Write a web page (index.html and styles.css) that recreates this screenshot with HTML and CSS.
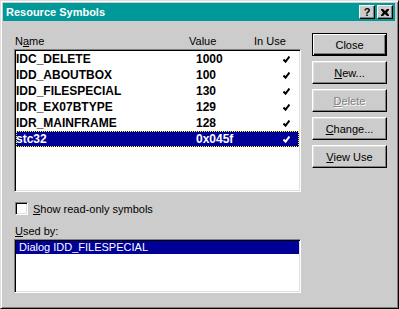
FILE: index.html
```html
<!DOCTYPE html>
<html lang="en">
<head>
  <meta charset="UTF-8">
  <title>Resource Symbols</title>
  <link rel="stylesheet" href="styles.css">
</head>
<body>
  <div class="window">
    <div class="titlebar">
      <span class="title">Resource Symbols</span>
      <div class="title-buttons">
        <span class="tbtn">?</span>
        <span class="tbtn">
          <svg width="8" height="7" viewBox="0 0 8 7"><path d="M0 0h2l2 2 2-2h2v1l-2 2.5 2 2.5v1H6l-2-2-2 2H0V6l2-2.5L0 1z" fill="#000"/></svg>
        </span>
      </div>
    </div>

    <div class="content">
      <div class="left">
        <div class="headers">
          <span class="col-name">N<u>a</u>me</span>
          <span class="col-value">Value</span>
          <span class="col-use">In Use</span>
        </div>

        <div class="listbox symbols">
          <div class="row"><span>IDC_DELETE</span><span>1000</span><svg class="check" width="7" height="7" viewBox="0 0 7 7"><path d="M0.5 3.5l2 2.2 4-5.2" /></svg></div>
          <div class="row"><span>IDD_ABOUTBOX</span><span>100</span><svg class="check" width="7" height="7" viewBox="0 0 7 7"><path d="M0.5 3.5l2 2.2 4-5.2" /></svg></div>
          <div class="row"><span>IDD_FILESPECIAL</span><span>130</span><svg class="check" width="7" height="7" viewBox="0 0 7 7"><path d="M0.5 3.5l2 2.2 4-5.2" /></svg></div>
          <div class="row"><span>IDR_EX07BTYPE</span><span>129</span><svg class="check" width="7" height="7" viewBox="0 0 7 7"><path d="M0.5 3.5l2 2.2 4-5.2" /></svg></div>
          <div class="row"><span>IDR_MAINFRAME</span><span>128</span><svg class="check" width="7" height="7" viewBox="0 0 7 7"><path d="M0.5 3.5l2 2.2 4-5.2" /></svg></div>
          <div class="row selected"><span>stc32</span><span>0x045f</span><svg class="check" width="7" height="7" viewBox="0 0 7 7"><path d="M0.5 3.5l2 2.2 4-5.2" /></svg></div>
        </div>

        <label class="checkbox-row">
          <span class="checkbox"></span>
          <span><u>S</u>how read-only symbols</span>
        </label>

        <div class="used-label"><u>U</u>sed by:</div>
        <div class="listbox used">
          <div class="used-item">Dialog IDD_FILESPECIAL</div>
        </div>
      </div>

      <div class="right">
        <button class="btn default">Close</button>
        <button class="btn"><u>N</u>ew...</button>
        <button class="btn disabled"><u>D</u>elete</button>
        <button class="btn"><u>C</u>hange...</button>
        <button class="btn"><u>V</u>iew Use</button>
      </div>
    </div>
  </div>
</body>
</html>
```

FILE: styles.css
```css
body {
  margin: 0;
  background: #cccccc;
  font-family: 'Liberation Sans', Arial, sans-serif;
  font-size: 11px;
  color: #000;
}
.window {
  width: 399px;
  height: 309px;
  box-sizing: border-box;
  background: #cccccc;
  border: 1px solid;
  border-color: #dfdfdf #000 #000 #dfdfdf;
  box-shadow: inset 1px 1px #fff, inset -1px -1px #808080;
  padding: 2px 3px 0 2px;
}
.titlebar {
  height: 18px;
  background: #009999;
  display: flex;
  align-items: center;
  justify-content: space-between;
  padding: 0 2px 0 3px;
}
.title {
  color: #fff;
  font-weight: bold;
  font-size: 11px;
}
.title-buttons {
  display: flex;
  gap: 2px;
}
.tbtn {
  width: 16px;
  height: 14px;
  box-sizing: border-box;
  background: #cccccc;
  border: 1px solid;
  border-color: #fff #000 #000 #fff;
  box-shadow: inset -1px -1px #808080;
  display: flex;
  align-items: center;
  justify-content: center;
  font-weight: bold;
  font-size: 11px;
  line-height: 12px;
}
.content {
  display: flex;
}
.left {
  width: 287px;
  margin-left: 11px;
}
.headers {
  height: 13px;
  line-height: 13px;
  margin-top: 14px;
  margin-bottom: 1px;
  display: grid;
  grid-template-columns: 174px 65px 1fr;
  padding-left: 1px;
}
.listbox {
  box-sizing: border-box;
  background: #fff;
  border: 1px solid;
  border-color: #808080 #fff #fff #808080;
  box-shadow: inset 1px 1px #000, inset -1px -1px #dfdfdf;
  padding: 1px;
}
.symbols {
  height: 143px;
}
.row {
  display: grid;
  grid-template-columns: 180px 87px 7px;
  align-items: center;
  height: 16px;
  line-height: 16px;
  font-weight: bold;
  font-size: 12px;
}
.row.selected {
  background: #000099;
  color: #fff;
  outline: 1px dotted #ffff00;
  outline-offset: -1px;
}
.check {
  fill: none;
  stroke: currentColor;
  stroke-width: 2;
}
.checkbox-row {
  display: flex;
  align-items: center;
  gap: 5px;
  margin-top: 10px;
  margin-left: 1px;
  height: 13px;
}
.checkbox {
  width: 13px;
  height: 13px;
  box-sizing: border-box;
  background: #fff;
  border: 1px solid;
  border-color: #808080 #fff #fff #808080;
  box-shadow: inset 1px 1px #000, inset -1px -1px #dfdfdf;
}
.used-label {
  margin-top: 10px;
  margin-left: 1px;
  height: 13px;
  line-height: 13px;
}
.used {
  margin-top: 1px;
  height: 54px;
}
.used-item {
  background: #000099;
  color: #fff;
  height: 13px;
  line-height: 13px;
  padding-left: 3px;
}
.right {
  margin-left: 11px;
  margin-top: 12px;
  display: flex;
  flex-direction: column;
  gap: 5px;
}
.btn {
  width: 75px;
  height: 23px;
  box-sizing: border-box;
  background: #cccccc;
  font-family: inherit;
  font-size: 11px;
  color: #000;
  padding: 0;
  border: 1px solid;
  border-color: #fff #000 #000 #fff;
  box-shadow: inset -1px -1px #808080, inset 1px 1px #dfdfdf;
}
.btn.default {
  border-color: #000;
  box-shadow: inset 1px 1px #fff, inset -1px -1px #000, inset -2px -2px #808080;
}
.btn.disabled {
  color: #808080;
  text-shadow: 1px 1px #fff;
}
```
